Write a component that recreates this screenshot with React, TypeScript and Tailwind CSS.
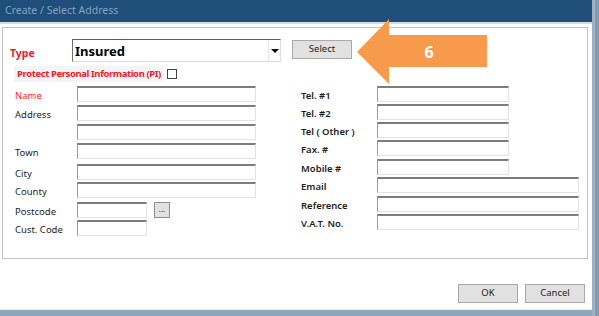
import React from "react";

const inputCls =
  "bg-white h-[16px] border border-t-2 border-t-[#7d7d7d] border-l-[#9c9c9c] border-r-[#e2e2e2] border-b-[#e2e2e2]";

type Row = { label: string; w: string; mt: string; red?: boolean; extra?: boolean };

const leftRows: Row[] = [
  { label: "Name", w: "w-[179px]", mt: "mt-0", red: true },
  { label: "Address", w: "w-[179px]", mt: "mt-[3px]" },
  { label: "", w: "w-[179px]", mt: "mt-[3px]" },
  { label: "Town", w: "w-[179px]", mt: "mt-[3px]" },
  { label: "City", w: "w-[179px]", mt: "mt-[5px]" },
  { label: "County", w: "w-[179px]", mt: "mt-[2px]" },
  { label: "Postcode", w: "w-[70px]", mt: "mt-[4px]", extra: true },
  { label: "Cust. Code", w: "w-[70px]", mt: "mt-[2px]" },
];

const rightRows: Row[] = [
  { label: "Tel. #1", w: "w-[132px]", mt: "mt-0" },
  { label: "Tel. #2", w: "w-[132px]", mt: "mt-[2px]" },
  { label: "Tel ( Other )", w: "w-[132px]", mt: "mt-[2px]" },
  { label: "Fax. #", w: "w-[132px]", mt: "mt-[2px]" },
  { label: "Mobile #", w: "w-[132px]", mt: "mt-[3px]" },
  { label: "Email", w: "w-[202px]", mt: "mt-[2px]" },
  { label: "Reference", w: "w-[202px]", mt: "mt-[3px]" },
  { label: "V.A.T. No.", w: "w-[202px]", mt: "mt-[2px]" },
];

function Field({ row, labelW, bold }: { row: Row; labelW: string; bold?: boolean }) {
  return (
    <div className={`flex items-center ${row.mt}`}>
      <span
        className={`${labelW} pt-[4px] text-[9.5px] leading-none ${
          row.red ? "text-[#ff1f2e]" : "text-[#1e1e1e]"
        } ${bold ? "font-semibold" : ""}`}
      >
        {row.label}
      </span>
      <div className={`${inputCls} ${row.w}`} />
      {row.extra && (
        <div className="ml-[7px] w-[16px] h-[16px] bg-[#e1e1e1] border border-[#8f8f8f] flex items-center justify-center text-[8px] leading-none text-[#333] pb-[3px]">
          ...
        </div>
      )}
    </div>
  );
}

export default function App() {
  return (
    <div className="relative w-[599px] h-[316px] flex bg-white overflow-hidden font-['Noto_Sans',sans-serif]">
      <div className="flex-1 flex flex-col">
        <div className="h-[22px] bg-[#1f4e7a] pl-[5px] flex items-center text-[10.5px] text-[#86a2bf]">
          Create / Select Address
        </div>
        <div className="h-[2px] bg-[#d3d9df]" />
        <div className="flex-1 flex flex-col">
          <div className="mt-[3px] ml-[2px] w-[586px] h-[232px] border border-[#c3c3c3] bg-white flex flex-col">
            {/* type row */}
            <div className="flex items-start pt-[11px] pl-[7px]">
              <span className="w-[62px] mt-[9px] text-[10.5px] leading-none font-bold text-[#f01a2a]">Type</span>
              <div className="w-[209px] h-[23px] flex border border-t-[#5f5f5f] border-l-[#6f6f6f] border-r-[#dcdcdc] border-b-[#dcdcdc] bg-white">
                <span className="flex-1 pl-[2px] text-[13px] leading-[22px] font-bold text-black">Insured</span>
                <div className="w-[12px] border-l border-[#e6e6e6] flex items-center justify-center">
                  <div className="w-0 h-0 border-l-[4px] border-r-[4px] border-t-[4px] border-l-transparent border-r-transparent border-t-black" />
                </div>
              </div>
              <div className="ml-[11px] mt-[1px] w-[60px] h-[19px] bg-[#e1e1e1] border border-[#a9a9a9] flex items-center justify-center text-[9.5px] text-[#1e1e1e]">
                Select
              </div>
            </div>
            {/* PI row */}
            <div className="flex items-center mt-[4px] ml-[11px] h-[16px]">
              <span className="bg-[#f4f4f4] px-[3px] h-[16px] flex items-center pt-[1px] text-[9.5px] tracking-[-0.4px] font-bold text-[#f01a2a]">
                Protect Personal Information (PI)
              </span>
              <div className="ml-[3px] w-[10px] h-[10px] border border-[#444] bg-white" />
            </div>
            {/* fields */}
            <div className="flex mt-[4px] pl-[12px]">
              <div className="flex flex-col w-[286px]">
                {leftRows.map((r, i) => (
                  <Field key={i} row={r} labelW="w-[62px]" />
                ))}
              </div>
              <div className="flex flex-col">
                {rightRows.map((r, i) => (
                  <Field key={i} row={r} labelW="w-[76px]" bold />
                ))}
              </div>
            </div>
          </div>
          <div className="flex justify-end gap-[7px] mt-[25px] pr-[7px]">
            <div className="w-[60px] h-[19px] bg-[#e1e1e1] border border-[#a9a9a9] flex items-center justify-center text-[9.5px] text-[#1e1e1e]">
              OK
            </div>
            <div className="w-[60px] h-[19px] bg-[#e1e1e1] border border-[#a9a9a9] flex items-center justify-center text-[9.5px] text-[#1e1e1e]">
              Cancel
            </div>
          </div>
        </div>
        <div className="h-[7px] bg-[#8fa5b8] border-t border-[#eef1f4]" />
      </div>
      <div className="w-[7px] flex">
        <div className="w-[3px] bg-[#9db0c2]" />
        <div className="flex-1 bg-[#8399ad]" />
      </div>

      {/* callout arrow */}
      <svg className="absolute left-0 top-0" width="599" height="316" viewBox="0 0 599 316">
        <polygon points="357,52 389,19 389,35 487,35 487,67 389,67 389,84" fill="#f79a4c" />
        <text x="429" y="58" textAnchor="middle" fill="#fff" fontSize="16" fontWeight="700" fontFamily="Noto Sans, sans-serif">
          6
        </text>
      </svg>
    </div>
  );
}
